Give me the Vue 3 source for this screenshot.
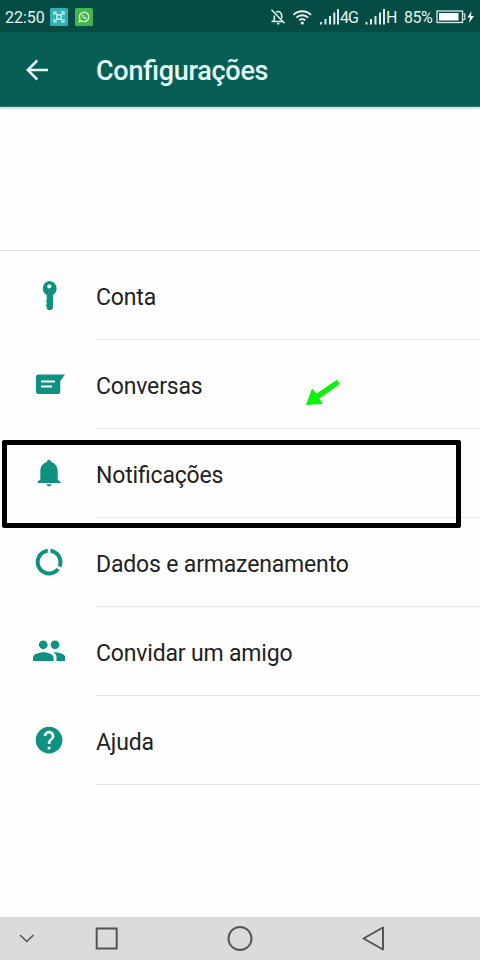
<script setup>
const items = [
  { id: 'key', label: 'Conta' },
  { id: 'chat', label: 'Conversas' },
  { id: 'bell', label: 'Notificações' },
  { id: 'data', label: 'Dados e armazenamento' },
  { id: 'group', label: 'Convidar um amigo' },
  { id: 'help', label: 'Ajuda' },
]
</script>

<template>
  <div class="screen">
    <div class="status">
      <span class="clock">22:50</span>
      <svg class="app-badge" width="18" height="18" viewBox="0 0 18 18">
        <rect width="18" height="18" rx="1.5" fill="#2fb3b8" />
        <g fill="none" stroke="#d5f7f7" stroke-width="1.2">
          <path d="M4 7V4.2h2.8M11.2 4.200H14V7M14 11v2.800h-2.800M6.800 13.800H4V11" />
          <circle cx="9" cy="9" r="2.300" />
          <path d="M5.500 5.500l1.500 1.500M12.500 5.500L11 7M5.500 12.500L7 11M12.500 12.500L11 11" />
        </g>
      </svg>
      <svg class="app-badge second" width="18" height="18" viewBox="0 0 18 18">
        <rect width="18" height="18" rx="1.5" fill="#45b649" />
        <path d="M4.200 13.800l.8-2.700a4.700 4.700 0 1 1 1.900 1.900z" fill="none" stroke="#e4ffe0" stroke-width="1.200" />
        <path d="M7.200 6.700c-.7 1.800 2.200 4.700 4 4l.3-1-1.200-.7-.7.600c-.7-.3-1.100-.8-1.400-1.400l.5-.7-.6-1.100z" fill="#e4ffe0" />
      </svg>
      <svg class="indicators" width="71" height="20" viewBox="0 0 71 20">
        <g fill="none" stroke="#d9ece8" stroke-width="1.600">
          <path d="M2.500 14.500H14M4 14.500l1.300-1.800V8.500M7 5.200c3-1.800 5.700.4 5.700 3.300v3M2.500 2.800l13 13.500" />
          <path d="M8 16.700h2.500" />
        </g>
        <g fill="none" stroke="#e8f6f3" stroke-width="1.800">
          <path d="M24.500 7.800a12.500 12.500 0 0 1 17.500 0M27.300 10.700a8.500 8.500 0 0 1 11.900 0M30.200 13.400a4.500 4.500 0 0 1 6.100 0" />
        </g>
        <circle cx="33.300" cy="16" r="1.600" fill="#e8f6f3" />
        <path d="M51 15h2v2.500h-2zM55.500 12h2v5.500h-2zM60 9h2v8.500h-2zM64.300 5.500h2v12h-2zM68 2h2v15.500h-2z" fill="#d9ece8" />
      </svg>
      <span class="net g4">4G</span>
      <svg class="bars" width="21" height="20" viewBox="0 0 21 20">
        <path d="M.5 15h2v2.500h-2zM5 12h2v5.500H5zM9.500 9h2v8.500h-2zM14 5.500h2v12h-2zM18 2h2v15.500h-2z" fill="#d9ece8" />
      </svg>
      <span class="net h">H</span>
      <span class="percent">85%</span>
      <svg class="battery" width="39" height="16" viewBox="0 0 39 16">
        <rect x="1" y="2" width="25.500" height="11.500" fill="none" stroke="#d9ece8" stroke-width="1.300" />
        <rect x="3" y="4" width="19.500" height="7.500" fill="#fff" />
        <path d="M27 5h1.800v5.500H27" fill="none" stroke="#d9ece8" stroke-width="1.200" />
        <path d="M35.500 2l-4 6.500h2.700L33 14l5-7h-3z" fill="#fff" />
      </svg>
    </div>

    <header class="appbar">
      <svg class="back" width="24" height="24" viewBox="0 0 24 24">
        <path d="M23 12H3M12.300 2.500L2.800 12l9.500 9.500" fill="none" stroke="#e6f8f5" stroke-width="2.500" />
      </svg>
      <h1>Configurações</h1>
    </header>

    <div class="profile"></div>

    <main class="list">
      <div v-for="item in items" :key="item.id" class="row">
        <svg class="icon" width="32" height="32" viewBox="0 0 32 32">
          <path v-if="item.id === 'key'" fill-rule="evenodd" d="M16.300 2a7.500 7.500 0 0 1 3.700 13.900v13l-1.800 2h-3l-1.500-1.500v-2l-1-1 1-1.200v-2l-1-1 1-1.200v-5A7.500 7.500 0 0 1 16.300 2zm0 3.200a2.100 2.100 0 1 0 0 4.200 2.100 2.100 0 0 0 0-4.200z" />
          <path v-else-if="item.id === 'chat'" fill-rule="evenodd" d="M5.500 6.500h26.500l-4.700 6.500v10.500a2.500 2.500 0 0 1-2.500 2.500H5.500A2.500 2.500 0 0 1 3 23.500V9a2.500 2.500 0 0 1 2.500-2.500zM8 12.500v2h14v-2zm0 5v2h11v-2z" />
          <path v-else-if="item.id === 'bell'" d="M16 2.800c1.300 0 2 .9 2 2.100 4.200 1 6.700 4.600 6.700 9v8.600l2.800 2.200v1.300h-23v-1.300l2.800-2.200v-8.600c0-4.400 2.500-8 6.700-9 0-1.200.7-2.100 2-2.100zM13.500 27.200h5c-.3 1.500-1.300 2.100-2.500 2.100s-2.200-.6-2.500-2.100z" />
          <path v-else-if="item.id === 'data'" transform="scale(1.340)" d="M13 2.050v3.030c3.390.49 6 3.390 6 6.920 0 .9-.18 1.750-.48 2.540l2.600 1.530c.56-1.240.88-2.620.88-4.070 0-5.180-3.950-9.450-9-9.950zM12 19c-3.870 0-7-3.130-7-7 0-3.530 2.610-6.430 6-6.920V2.050c-5.060.5-9 4.760-9 9.950 0 5.520 4.470 10 9.990 10 3.310 0 6.240-1.610 8.060-4.090l-2.600-1.530C16.170 17.980 14.210 19 12 19z" />
          <path v-else-if="item.id === 'group'" transform="translate(-1.500 -1.900) scale(1.470)" d="M16 11c1.660 0 2.990-1.340 2.990-3S17.660 5 16 5s-3 1.340-3 3 1.340 3 3 3zm-8 0c1.660 0 2.990-1.340 2.990-3S9.660 5 8 5 5 6.340 5 8s1.340 3 3 3zm0 2c-2.330 0-7 1.170-7 3.500V19h14v-2.500c0-2.330-4.670-3.500-7-3.500zm8 0c-.29 0-.62.020-.97.050 1.160.84 1.970 1.970 1.970 3.450V19h6v-2.500c0-2.330-4.670-3.500-7-3.500z" />
          <path v-else transform="scale(1.340)" d="M12 2C6.480 2 2 6.480 2 12s4.480 10 10 10 10-4.480 10-10S17.520 2 12 2zm1 17h-2v-2h2v2zm2.070-7.750l-.9.920C13.450 12.900 13 13.500 13 15h-2v-.5c0-1.100.45-2.100 1.170-2.830l1.240-1.260c.37-.36.590-.86.590-1.410 0-1.100-.9-2-2-2s-2 .9-2 2H8c0-2.210 1.790-4 4-4s4 1.790 4 4c0 .88-.36 1.680-.93 2.250z" />
        </svg>
        <div class="label">{{ item.label }}</div>
      </div>
    </main>

    <nav class="navbar">
      <svg width="480" height="42" viewBox="0 0 480 42" fill="none" stroke="#555" stroke-width="2">
        <path d="M20 18l6.800 6.500L33.500 18" stroke-width="1.600" />
        <rect x="96.700" y="11.500" width="20" height="20" />
        <circle cx="240" cy="21.500" r="11.500" />
        <path d="M383 10.500v22L363.500 21.500z" stroke-linejoin="round" />
      </svg>
    </nav>

    <div class="highlight"></div>
    <svg class="pointer" width="38" height="30" viewBox="0 0 38 30">
      <path d="M1 26L7 9.500l4.500 5L32 0.700l3 4.300-20.500 14.500 3.500 5.500z" fill="#0df20d" />
    </svg>
  </div>
</template>

<style>
body { margin: 0; background: #fff; }
</style>

<style scoped>
.screen {
  position: relative;
  display: flex;
  flex-direction: column;
  width: 480px;
  height: 960px;
  overflow: hidden;
  background: #fefefe;
  font-family: Roboto, "Liberation Sans", sans-serif;
}
.status {
  display: flex;
  align-items: center;
  height: 32px;
  box-sizing: border-box;
  padding: 2px 0 0 5px;
  background: #054d44;
  color: #e3f3f0;
  white-space: nowrap;
}
.status svg { flex: none; }
.clock { width: 45px; padding-top: 1px; font-size: 16px; line-height: 32px; }
.app-badge.second { margin-left: 7px; }
.indicators { margin: 0 0 0 176px; }
.net { font-size: 16px; }
.g4 { width: 25px; letter-spacing: -1px; }
.h { width: 18px; }
.percent { width: 32px; padding-top: 1px; font-size: 16px; letter-spacing: -0.5px; }
.appbar {
  display: flex;
  align-items: center;
  height: 75px;
  box-sizing: border-box;
  padding-left: 25px;
  background: #075e55;
  border-bottom: 1px solid #2f776f;
  box-shadow: 0 2px 2px #c9dfdb;
}
.back { margin-top: 2px; }
h1 {
  margin: 4px 0 0 47px;
  color: #e4faf6;
  font-size: 27px;
  font-weight: 500;
  letter-spacing: -0.27px;
  font-feature-settings: "liga" 1;
  line-height: 32px;
}
.profile {
  height: 144px;
  box-sizing: border-box;
  border-bottom: 1px solid #e0e0e0;
}
.list { flex: 1; }
.row { display: flex; height: 89px; }
.icon { margin: 28px 31px 0 33px; flex: none; fill: #0e9180; }
.label {
  flex: 1;
  box-sizing: border-box;
  padding-top: 3px;
  border-bottom: 1px solid #e4e4e4;
  color: #222;
  font-size: 23px;
  letter-spacing: -0.17px;
  font-feature-settings: "liga" 1;
  line-height: 88px;
}
.navbar { height: 43px; background: #dbdbdb; }
.navbar svg { display: block; }
.highlight {
  position: absolute;
  left: 2px;
  top: 440px;
  width: 459px;
  height: 88px;
  box-sizing: border-box;
  border: 5px solid #000;
  border-radius: 2px;
}
.pointer { position: absolute; left: 305px; top: 379px; }
</style>
